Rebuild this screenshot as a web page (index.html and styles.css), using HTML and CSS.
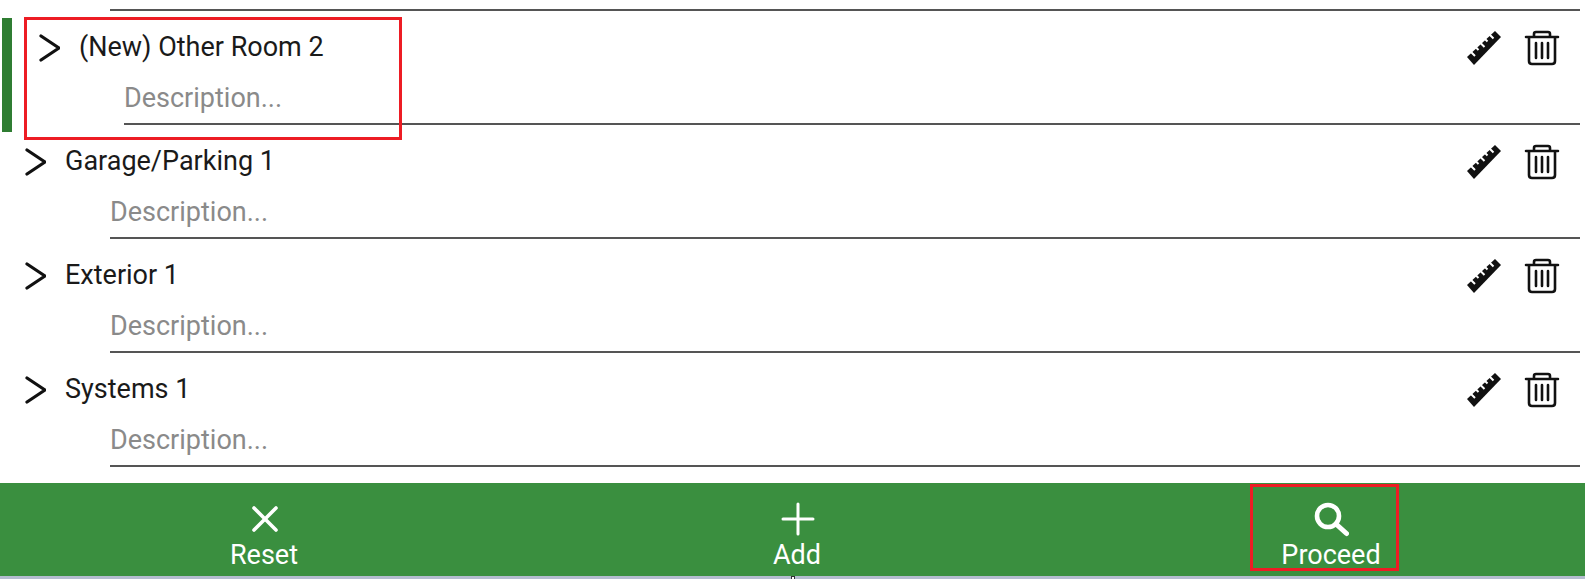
FILE: index.html
```html
<html>
	<head>
		<title>Rooms</title>
		<meta name="viewport" content="width=device-width, initial-scale=1">
		<link rel="stylesheet" href="styles.css">
	</head>
	<body>
		<svg class="defs" width="0" height="0">
			<symbol id="ruler" viewBox="0 0 36 36">
				<path d="M1 27 29 1 35 7 8 35Z" fill="#111" />
				<path d="M4 21 9 26 M9 16.500 12.500 20 M13.500 12 18.500 17 M18 8 21.500 11.500 M22.500 3.500 27.500 8.500" stroke="#fff" stroke-width="2" fill="none" />
			</symbol>
			<symbol id="trash" viewBox="0 0 36 36">
				<path d="M2 7H34 M10 7V4Q10 2 12 2H24Q26 2 26 4V7 M5 7V31Q5 34 8 34H28Q31 34 31 31V7 M12 13V28 M18 13V28 M24 13V28" stroke="#111" stroke-width="2.600" fill="none" stroke-linecap="round" />
			</symbol>
			<symbol id="chevron" viewBox="0 0 24 30">
				<path d="M5 3 23 15 5 27" stroke="#111" stroke-width="3.200" fill="none" stroke-linecap="round" stroke-linejoin="round" />
			</symbol>
		</svg>
		<div class="top-rule"></div>
		<div class="room room-new">
			<div class="room-head">
				<svg class="chevron"><use href="#chevron" /></svg>
				<span class="room-name">(New) Other Room 2</span>
				<svg class="tool ruler"><use href="#ruler" /></svg>
				<svg class="tool"><use href="#trash" /></svg>
			</div>
			<p class="room-desc">Description...</p>
			<div class="mark"></div>
		</div>
		<div class="room">
			<div class="room-head">
				<svg class="chevron"><use href="#chevron" /></svg>
				<span class="room-name">Garage/Parking 1</span>
				<svg class="tool ruler"><use href="#ruler" /></svg>
				<svg class="tool"><use href="#trash" /></svg>
			</div>
			<p class="room-desc">Description...</p>
		</div>
		<div class="room">
			<div class="room-head">
				<svg class="chevron"><use href="#chevron" /></svg>
				<span class="room-name">Exterior 1</span>
				<svg class="tool ruler"><use href="#ruler" /></svg>
				<svg class="tool"><use href="#trash" /></svg>
			</div>
			<p class="room-desc">Description...</p>
		</div>
		<div class="room">
			<div class="room-head">
				<svg class="chevron"><use href="#chevron" /></svg>
				<span class="room-name">Systems 1</span>
				<svg class="tool ruler"><use href="#ruler" /></svg>
				<svg class="tool"><use href="#trash" /></svg>
			</div>
			<p class="room-desc">Description...</p>
		</div>
		<div class="toolbar">
			<button class="action">
				<svg class="action-icon" viewBox="0 0 36 36"><path d="M7 7 29 29 M29 7 7 29" stroke="#fff" stroke-width="3.600" stroke-linecap="round" /></svg>
				<span>Reset</span>
			</button>
			<button class="action">
				<svg class="action-icon" viewBox="0 0 36 36"><path d="M18 3V33 M3 18H33" stroke="#fff" stroke-width="3" stroke-linecap="round" /></svg>
				<span>Add</span>
			</button>
			<button class="action action-last">
				<svg class="action-icon" viewBox="0 0 36 36"><circle cx="15" cy="15" r="11" stroke="#fff" stroke-width="4.600" fill="none" /><path d="M23 23 33.500 32.500" stroke="#fff" stroke-width="5" stroke-linecap="round" /></svg>
				<span>Proceed</span>
			</button>
		</div>
		<div class="strip"><div class="strip-dot"></div></div>
		<div class="callout callout-room"></div>
		<div class="callout callout-proceed"></div>
	</body>
</html>
```

FILE: styles.css
```css
*{
	box-sizing: border-box;
}
body{
	position: relative;
	height: 579px;
	margin: 0;
	padding: 0;
	overflow: hidden;
	background-color: #fff;
	font-family: Roboto, sans-serif;
}
.defs{
	position: absolute;
}
.top-rule{
	height: 11px;
	margin: 0 5px 7px 110px;
	border-bottom: 2px solid #555;
}
.room{
	position: relative;
	height: 114px;
	padding-left: 22px;
}
.room-new{
	padding-left: 36px;
}
.room-head{
	display: flex;
	align-items: center;
	height: 59px;
	padding-right: 25px;
}
.chevron{
	width: 24px;
	height: 30px;
	margin-right: 19px;
}
.room-name{
	flex: 1;
	padding-bottom: 2px;
	font-size: 27px;
	color: #1a1a1a;
}
.tool{
	width: 36px;
	height: 36px;
}
.ruler{
	margin-right: 22px;
}
.room-desc{
	height: 48px;
	margin: 0 5px 0 88px;
	padding-top: 8px;
	border-bottom: 2px solid #555;
	font-size: 27px;
	line-height: 27px;
	color: #8a8a8a;
}
.mark{
	position: absolute;
	top: 0;
	left: 2px;
	width: 10px;
	height: 114px;
	background-color: #2f7d32;
}
.toolbar{
	display: grid;
	grid-template-columns: 530px 536px 1fr;
	height: 93px;
	margin-top: 9px;
	background-color: #3a8f3f;
}
.action{
	display: flex;
	flex-direction: column;
	align-items: center;
	padding: 18px 0 0;
	border: 0;
	background-color: transparent;
	color: #fff;
	font-family: Roboto, sans-serif;
	font-size: 27px;
	line-height: 27px;
}
.action span{
	margin: 5px 2px 0 0;
}
.action-last{
	padding-left: 11px;
}
.action-last span{
	margin-right: 0;
}
.action-icon{
	width: 36px;
	height: 36px;
}
.strip{
	height: 3px;
	padding-left: 791px;
	background-color: #b4bccf;
}
.strip-dot{
	width: 4px;
	height: 3px;
	border: 1px solid #333;
	border-bottom: 0;
	background-color: #fff;
}
.callout{
	position: absolute;
	border: 3px solid #ed1c24;
}
.callout-room{
	top: 17px;
	left: 24px;
	width: 378px;
	height: 123px;
}
.callout-proceed{
	top: 484px;
	left: 1250px;
	width: 149px;
	height: 87px;
}
```
